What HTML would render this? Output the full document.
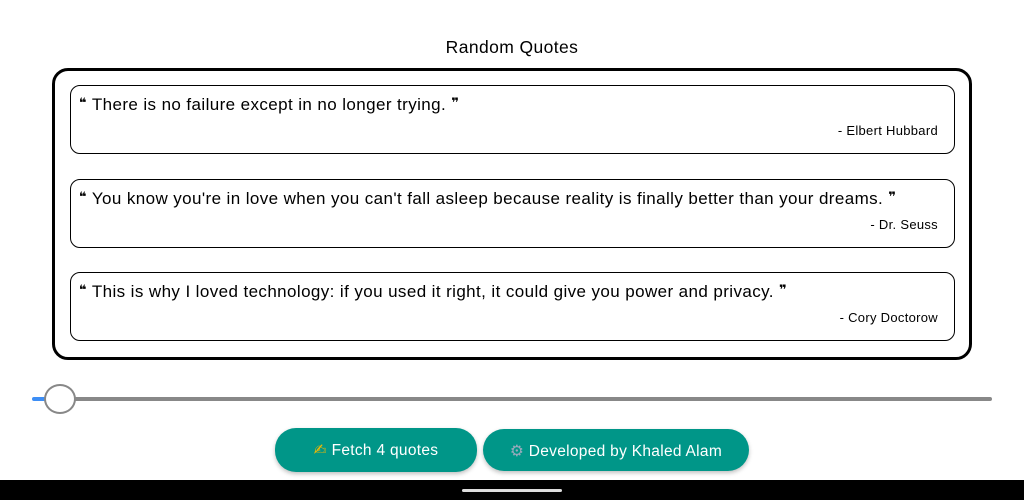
<!DOCTYPE html>
<html><head><meta charset="utf-8"><style>
body{margin:0;width:1024px;height:500px;background:#fff;position:relative;overflow:hidden;font-family:"Liberation Sans","DejaVu Sans",sans-serif;color:#000}
.t{position:absolute;top:37px;left:0;width:1024px;text-align:center;font-size:17.5px;letter-spacing:0.4px}
.outer{position:absolute;left:52px;top:68px;width:914px;height:286px;border:3px solid #000;border-radius:16px}
.card{position:absolute;left:70px;width:883px;height:67px;border:1px solid #000;border-radius:10px}
.q{position:absolute;left:8px;top:9px;font-size:17px;letter-spacing:0.4px;white-space:nowrap}
.q b{font-size:13px;vertical-align:3px;font-family:"DejaVu Sans",sans-serif}
.a{position:absolute;right:16px;top:37px;font-size:13px;letter-spacing:0.3px}
.btn{position:absolute;background:#009688;color:#fff;border-radius:21px;font-size:15.5px;letter-spacing:0.3px;text-align:center;box-shadow:0 2px 4px rgba(0,0,0,.25)}
</style></head><body>
<div class="t">Random Quotes</div>
<div class="outer"></div>
<div class="card" style="top:85px"><div class="q"><b>❝</b> There is no failure except in no longer trying. <b>❞</b></div><div class="a">- Elbert Hubbard</div></div>
<div class="card" style="top:179px"><div class="q"><b>❝</b> You know you're in love when you can't fall asleep because reality is finally better than your dreams. <b>❞</b></div><div class="a">- Dr. Seuss</div></div>
<div class="card" style="top:272px"><div class="q"><b>❝</b> This is why I loved technology: if you used it right, it could give you power and privacy. <b>❞</b></div><div class="a">- Cory Doctorow</div></div>
<div style="position:absolute;left:45px;top:397px;width:947px;height:4px;background:#888;border-radius:2px"></div>
<div style="position:absolute;left:32px;top:397px;width:16px;height:4px;background:#3d8ef5;border-radius:2px"></div>
<div style="position:absolute;left:44px;top:384px;width:28px;height:26px;border:2px solid #888;border-radius:50%;background:#fff"></div>
<div class="btn" style="left:275px;top:428px;width:202px;height:44px;line-height:46px"><span style="color:#f5b800">✍</span> Fetch 4 quotes</div>
<div class="btn" style="left:483px;top:429px;width:266px;height:42px;line-height:45px"><span style="color:#9ab">⚙</span> Developed by Khaled Alam</div>
<div style="position:absolute;left:0;top:480px;width:1024px;height:20px;background:#000"></div>
<div style="position:absolute;left:462px;top:489px;width:100px;height:3px;background:#ddd;border-radius:2px"></div>
</body></html>
